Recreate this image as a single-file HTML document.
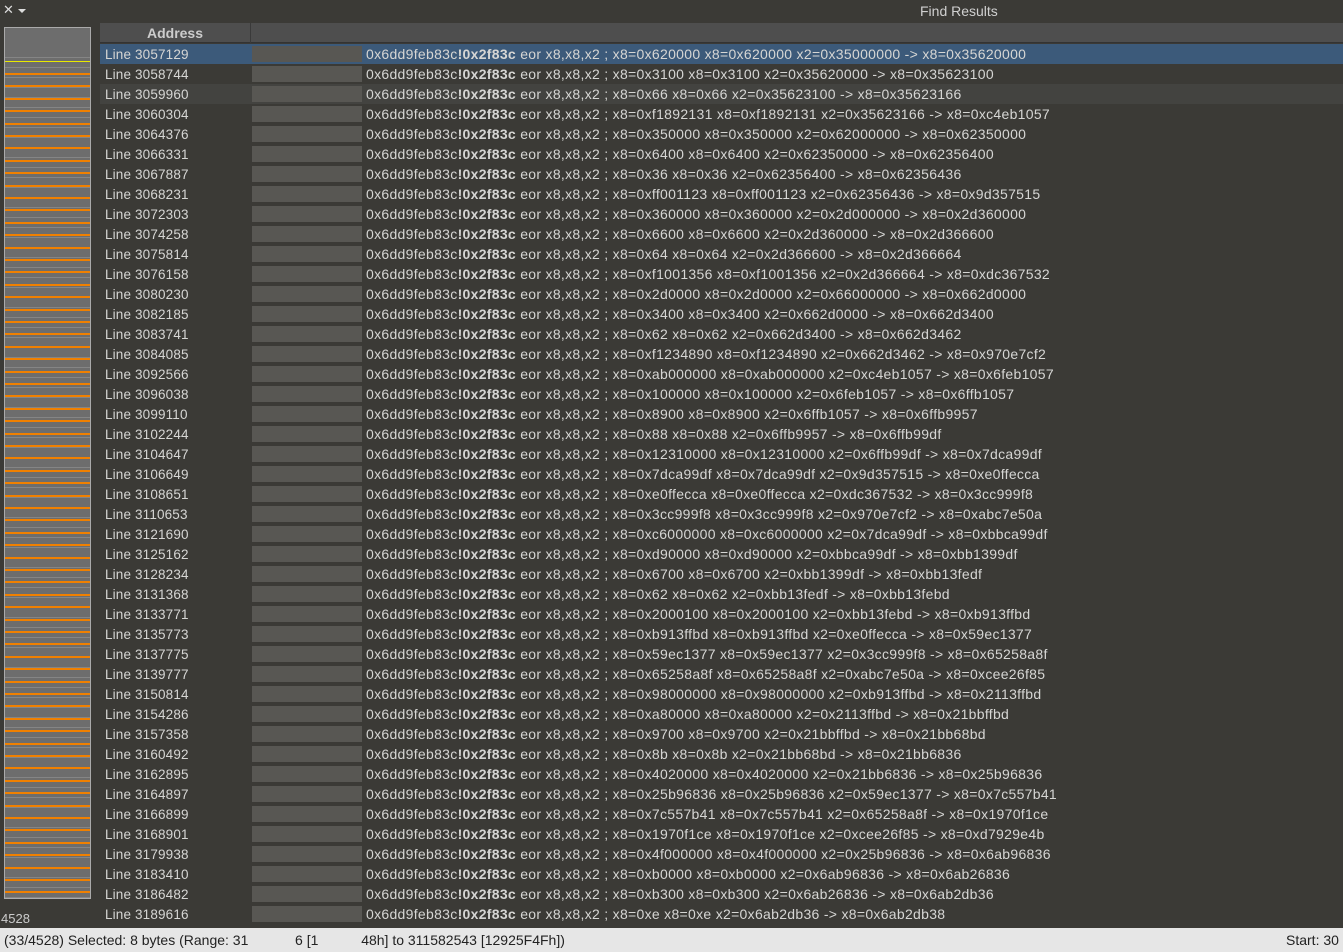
<!DOCTYPE html>
<html><head><meta charset="utf-8"><style>
*{margin:0;padding:0;box-sizing:border-box}
body{width:1343px;height:952px;background:#3b3a36;font-family:"Liberation Sans",sans-serif;font-size:13px;color:#d6d6d4;position:relative;overflow:hidden}
.top{position:absolute;top:0;left:0;width:1343px;height:23px}
.title{position:absolute;left:920px;top:3px;color:#d0d0d0;font-size:14px}
.x{position:absolute;left:3px;top:2px;font-size:13px;color:#ddd}
.tri{position:absolute;left:18px;top:9px;width:0;height:0;border-left:4px solid transparent;border-right:4px solid transparent;border-top:4px solid #ddd}
.hdr{position:absolute;left:100px;top:23px;width:1243px;height:20px;background:#4e4e4e;border-bottom:1px solid #333}
.hdr .a{position:absolute;left:0;width:150px;text-align:center;font-weight:bold;top:2px;color:#ccc;font-size:14px}
.hdr .sep{position:absolute;left:150px;top:0;width:1px;height:20px;background:#3a3a3a}
.rows{position:absolute;left:100px;top:44px;width:1243px}
.r{height:20px;line-height:21px;position:relative;white-space:nowrap}
.r.sel{background:#3c5a7a}
.r.hov{background:#434340}
.r .l{position:absolute;left:5px;font-size:13.5px;letter-spacing:0.15px}
.r .b{position:absolute;left:152px;width:110px;top:2px;height:16px;background:#585753}
.r .t{position:absolute;left:266px;font-size:14px;letter-spacing:0.3px}
.mini{position:absolute;left:4px;top:27px;width:87px;height:872px;border:1px solid #aaa;background:repeating-linear-gradient(#6d6d6d 0 9px,#858585 9px 10px)}
.or{position:absolute;left:0;width:85px;height:2px;background:#f08000}
.cnt{position:absolute;left:1px;top:911px;font-size:13px;color:#ccc}
.status{position:absolute;left:0;top:928px;width:1343px;height:24px;background:#e6e6e6;color:#222;line-height:24px;padding-left:4px;font-size:14px}
.status span{position:absolute;left:1286px}
</style></head><body>
<div class="top"><div class="x">✕</div><div class="tri"></div><div class="title">Find Results</div></div>
<div class="mini" id="mini"><div style="position:absolute;left:0;top:0;width:85px;height:28px;background:#6d6d6d"></div><div class="or" style="top:33px;background:#e8e800;height:1px"></div></div>
<div class="cnt">4528</div>
<div class="hdr"><div class="a">Address</div><div class="sep"></div></div>
<div class="rows" id="rows"></div>
<div class="status">(33/4528) Selected: 8 bytes (Range: 31&nbsp;&nbsp;&nbsp;&nbsp;&nbsp;&nbsp;&nbsp;&nbsp;&nbsp;&nbsp;&nbsp;&nbsp;6 [1&nbsp;&nbsp;&nbsp;&nbsp;&nbsp;&nbsp;&nbsp;&nbsp;&nbsp;&nbsp;&nbsp;48h] to 311582543 [12925F4Fh])<span>Start: 30</span></div>
<script>
var d=[
["3057129","x8=0x620000 x8=0x620000 x2=0x35000000 -> x8=0x35620000"],
["3058744","x8=0x3100 x8=0x3100 x2=0x35620000 -> x8=0x35623100"],
["3059960","x8=0x66 x8=0x66 x2=0x35623100 -> x8=0x35623166"],
["3060304","x8=0xf1892131 x8=0xf1892131 x2=0x35623166 -> x8=0xc4eb1057"],
["3064376","x8=0x350000 x8=0x350000 x2=0x62000000 -> x8=0x62350000"],
["3066331","x8=0x6400 x8=0x6400 x2=0x62350000 -> x8=0x62356400"],
["3067887","x8=0x36 x8=0x36 x2=0x62356400 -> x8=0x62356436"],
["3068231","x8=0xff001123 x8=0xff001123 x2=0x62356436 -> x8=0x9d357515"],
["3072303","x8=0x360000 x8=0x360000 x2=0x2d000000 -> x8=0x2d360000"],
["3074258","x8=0x6600 x8=0x6600 x2=0x2d360000 -> x8=0x2d366600"],
["3075814","x8=0x64 x8=0x64 x2=0x2d366600 -> x8=0x2d366664"],
["3076158","x8=0xf1001356 x8=0xf1001356 x2=0x2d366664 -> x8=0xdc367532"],
["3080230","x8=0x2d0000 x8=0x2d0000 x2=0x66000000 -> x8=0x662d0000"],
["3082185","x8=0x3400 x8=0x3400 x2=0x662d0000 -> x8=0x662d3400"],
["3083741","x8=0x62 x8=0x62 x2=0x662d3400 -> x8=0x662d3462"],
["3084085","x8=0xf1234890 x8=0xf1234890 x2=0x662d3462 -> x8=0x970e7cf2"],
["3092566","x8=0xab000000 x8=0xab000000 x2=0xc4eb1057 -> x8=0x6feb1057"],
["3096038","x8=0x100000 x8=0x100000 x2=0x6feb1057 -> x8=0x6ffb1057"],
["3099110","x8=0x8900 x8=0x8900 x2=0x6ffb1057 -> x8=0x6ffb9957"],
["3102244","x8=0x88 x8=0x88 x2=0x6ffb9957 -> x8=0x6ffb99df"],
["3104647","x8=0x12310000 x8=0x12310000 x2=0x6ffb99df -> x8=0x7dca99df"],
["3106649","x8=0x7dca99df x8=0x7dca99df x2=0x9d357515 -> x8=0xe0ffecca"],
["3108651","x8=0xe0ffecca x8=0xe0ffecca x2=0xdc367532 -> x8=0x3cc999f8"],
["3110653","x8=0x3cc999f8 x8=0x3cc999f8 x2=0x970e7cf2 -> x8=0xabc7e50a"],
["3121690","x8=0xc6000000 x8=0xc6000000 x2=0x7dca99df -> x8=0xbbca99df"],
["3125162","x8=0xd90000 x8=0xd90000 x2=0xbbca99df -> x8=0xbb1399df"],
["3128234","x8=0x6700 x8=0x6700 x2=0xbb1399df -> x8=0xbb13fedf"],
["3131368","x8=0x62 x8=0x62 x2=0xbb13fedf -> x8=0xbb13febd"],
["3133771","x8=0x2000100 x8=0x2000100 x2=0xbb13febd -> x8=0xb913ffbd"],
["3135773","x8=0xb913ffbd x8=0xb913ffbd x2=0xe0ffecca -> x8=0x59ec1377"],
["3137775","x8=0x59ec1377 x8=0x59ec1377 x2=0x3cc999f8 -> x8=0x65258a8f"],
["3139777","x8=0x65258a8f x8=0x65258a8f x2=0xabc7e50a -> x8=0xcee26f85"],
["3150814","x8=0x98000000 x8=0x98000000 x2=0xb913ffbd -> x8=0x2113ffbd"],
["3154286","x8=0xa80000 x8=0xa80000 x2=0x2113ffbd -> x8=0x21bbffbd"],
["3157358","x8=0x9700 x8=0x9700 x2=0x21bbffbd -> x8=0x21bb68bd"],
["3160492","x8=0x8b x8=0x8b x2=0x21bb68bd -> x8=0x21bb6836"],
["3162895","x8=0x4020000 x8=0x4020000 x2=0x21bb6836 -> x8=0x25b96836"],
["3164897","x8=0x25b96836 x8=0x25b96836 x2=0x59ec1377 -> x8=0x7c557b41"],
["3166899","x8=0x7c557b41 x8=0x7c557b41 x2=0x65258a8f -> x8=0x1970f1ce"],
["3168901","x8=0x1970f1ce x8=0x1970f1ce x2=0xcee26f85 -> x8=0xd7929e4b"],
["3179938","x8=0x4f000000 x8=0x4f000000 x2=0x25b96836 -> x8=0x6ab96836"],
["3183410","x8=0xb0000 x8=0xb0000 x2=0x6ab96836 -> x8=0x6ab26836"],
["3186482","x8=0xb300 x8=0xb300 x2=0x6ab26836 -> x8=0x6ab2db36"],
["3189616","x8=0xe x8=0xe x2=0x6ab2db36 -> x8=0x6ab2db38"]];
var h="";
d.forEach(function(r,i){h+='<div class="r'+(i==0?' sel':i==2?' hov':'')+'"><span class="l">Line '+r[0]+'</span><div class="b"></div><span class="t">0x6dd9feb83c<b>!0x2f83c</b> eor x8,x8,x2 ; '+r[1]+'</span></div>';});
document.getElementById('rows').innerHTML=h;
var m="";for(var y=45;y<870;y+=12.4){m+='<div class="or" style="top:'+Math.round(y)+'px"></div>';}
document.getElementById('mini').innerHTML+=m;
</script>
</body></html>
